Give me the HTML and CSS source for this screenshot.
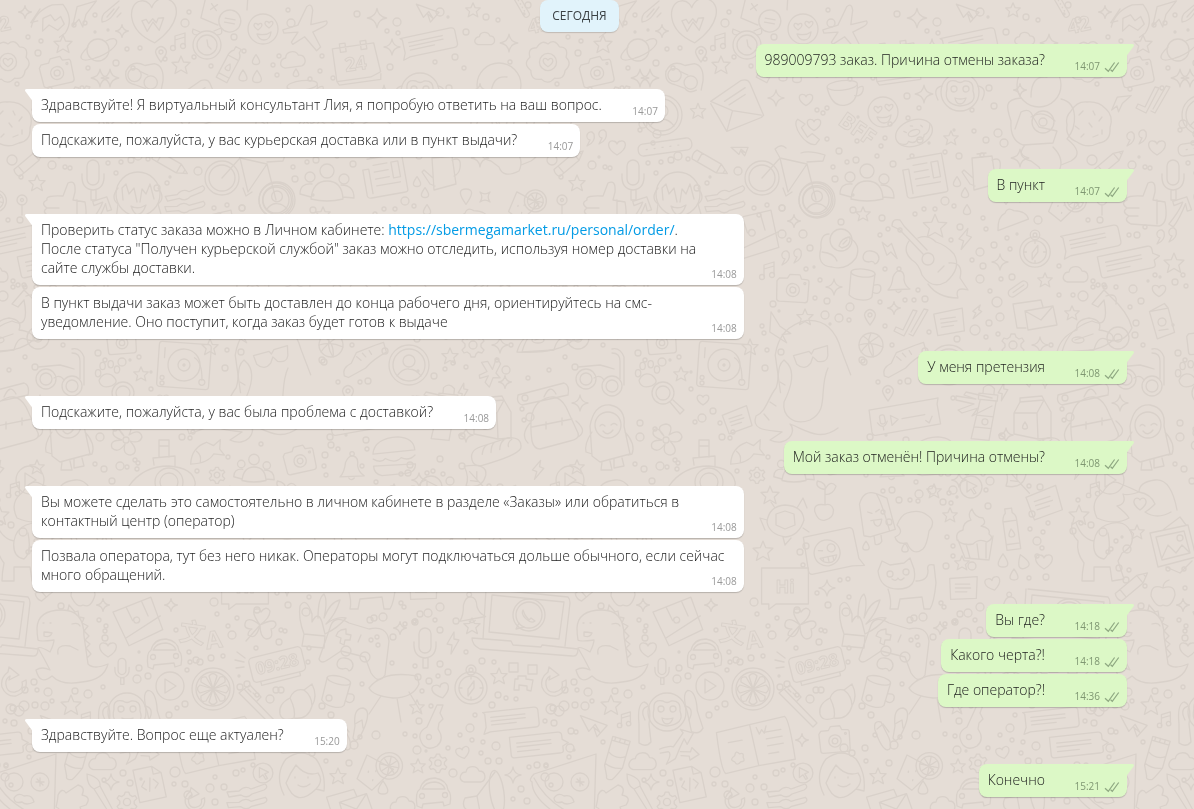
FILE: index.html
```html
<!DOCTYPE html>
<html lang="ru">
<head>
<meta charset="utf-8">
<title>Чат</title>
<link rel="stylesheet" href="styles.css">
</head>
<body>
<svg class="wallpaper" aria-hidden="true"></svg>
<svg class="defs" aria-hidden="true">
  <symbol id="tail" viewBox="0 0 8 12"><path d="M1.5 2.5 8 11.2V0H2.8C1 0 .5 1.100 1.500 2.500z"/></symbol>
  <symbol id="checks" viewBox="0 0 16 12"><path d="M1 7.200 4.300 10.300 10.600 1.500M6.600 8.800 8.300 10.300 14.700 1.500"/></symbol>
</svg>
<main class="chat">
  <div class="day"><span class="day-label">СЕГОДНЯ</span></div>

  <section class="group out">
    <article class="bubble"><svg class="tail"><use href="#tail"/></svg><p class="text">989009793 заказ. Причина отмены заказа?<span class="spacer"></span></p><div class="meta"><time>14:07</time><svg class="checks"><use href="#checks"/></svg></div></article>
  </section>

  <section class="group in">
    <article class="bubble"><svg class="tail"><use href="#tail"/></svg><p class="text">Здравствуйте! Я виртуальный консультант Лия, я попробую ответить на ваш вопрос.<span class="spacer"></span></p><div class="meta"><time>14:07</time></div></article>
    <article class="bubble"><p class="text">Подскажите, пожалуйста, у вас курьерская доставка или в пункт выдачи?<span class="spacer"></span></p><div class="meta"><time>14:07</time></div></article>
  </section>

  <section class="group out">
    <article class="bubble"><svg class="tail"><use href="#tail"/></svg><p class="text">В пункт<span class="spacer"></span></p><div class="meta"><time>14:07</time><svg class="checks"><use href="#checks"/></svg></div></article>
  </section>

  <section class="group in">
    <article class="bubble wide"><svg class="tail"><use href="#tail"/></svg><p class="text">Проверить статус заказа можно в Личном кабинете: <a href="https://sbermegamarket.ru/personal/order/">https://sbermegamarket.ru/personal/order/</a>.<br>После статуса "Получен курьерской службой" заказ можно отследить, используя номер доставки на<br>сайте службы доставки.<span class="spacer"></span></p><div class="meta"><time>14:08</time></div></article>
    <article class="bubble wide"><p class="text">В пункт выдачи заказ может быть доставлен до конца рабочего дня, ориентируйтесь на смс-<br>уведомление. Оно поступит, когда заказ будет готов к выдаче<span class="spacer"></span></p><div class="meta"><time>14:08</time></div></article>
  </section>

  <section class="group out">
    <article class="bubble"><svg class="tail"><use href="#tail"/></svg><p class="text">У меня претензия<span class="spacer"></span></p><div class="meta"><time>14:08</time><svg class="checks"><use href="#checks"/></svg></div></article>
  </section>

  <section class="group in">
    <article class="bubble"><svg class="tail"><use href="#tail"/></svg><p class="text">Подскажите, пожалуйста, у вас была проблема с доставкой?<span class="spacer"></span></p><div class="meta"><time>14:08</time></div></article>
  </section>

  <section class="group out">
    <article class="bubble"><svg class="tail"><use href="#tail"/></svg><p class="text">Мой заказ отменён! Причина отмены?<span class="spacer"></span></p><div class="meta"><time>14:08</time><svg class="checks"><use href="#checks"/></svg></div></article>
  </section>

  <section class="group in">
    <article class="bubble wide"><svg class="tail"><use href="#tail"/></svg><p class="text">Вы можете сделать это самостоятельно в личном кабинете в разделе «Заказы» или обратиться в<br>контактный центр (оператор)<span class="spacer"></span></p><div class="meta"><time>14:08</time></div></article>
    <article class="bubble wide"><p class="text">Позвала оператора, тут без него никак. Операторы могут подключаться дольше обычного, если сейчас<br>много обращений.<span class="spacer"></span></p><div class="meta"><time>14:08</time></div></article>
  </section>

  <section class="group out">
    <article class="bubble"><svg class="tail"><use href="#tail"/></svg><p class="text">Вы где?<span class="spacer"></span></p><div class="meta"><time>14:18</time><svg class="checks"><use href="#checks"/></svg></div></article>
    <article class="bubble"><p class="text">Какого черта?!<span class="spacer"></span></p><div class="meta"><time>14:18</time><svg class="checks"><use href="#checks"/></svg></div></article>
    <article class="bubble"><p class="text">Где оператор?!<span class="spacer"></span></p><div class="meta"><time>14:36</time><svg class="checks"><use href="#checks"/></svg></div></article>
  </section>

  <section class="group in">
    <article class="bubble"><svg class="tail"><use href="#tail"/></svg><p class="text">Здравствуйте. Вопрос еще актуален?<span class="spacer"></span></p><div class="meta"><time>15:20</time></div></article>
  </section>

  <section class="group out">
    <article class="bubble"><svg class="tail"><use href="#tail"/></svg><p class="text">Конечно<span class="spacer"></span></p><div class="meta"><time>15:21</time><svg class="checks"><use href="#checks"/></svg></div></article>
  </section>
</main>
<script src="wallpaper.js"></script>
</body>
</html>
```
FILE: styles.css
```css
* { box-sizing: border-box; }

body {
  margin: 0;
  background: #e5ddd6;
  color: #1c1c1c;
  font-family: "Open Sans", "Noto Sans", sans-serif;
  font-size: 14px;
  font-weight: 300;
  line-height: 19px;
}

.defs { display: none; }

.wallpaper {
  position: fixed;
  inset: 0;
  z-index: -1;
  width: 100%;
  height: 100%;
  fill: none;
  stroke: #d9d1ca;
  stroke-width: 1.3;
  stroke-linecap: round;
  stroke-linejoin: round;
}

.wallpaper * { vector-effect: non-scaling-stroke; }

.wallpaper text {
  font-family: "Open Sans", "Noto Sans CJK SC", sans-serif;
  font-weight: 700;
  font-size: 20px;
  text-anchor: middle;
  stroke-width: 1;
}

.wallpaper .digits { font-size: 17px; }

.chat {
  display: flex;
  flex-direction: column;
  gap: 12px;
  padding: 0 67px 12px 32px;
}

.day { display: flex; justify-content: center; }

.day-label {
  padding: 6px 12px 7px;
  border-radius: 8px;
  background: #e1f3fb;
  box-shadow: 0 1px 1px rgba(0, 0, 0, .16);
  color: #3b4144;
  font-size: 12px;
  font-weight: 400;
}

.group { display: flex; flex-direction: column; gap: 2px; }
.group.in { align-items: flex-start; }
.group.out { align-items: flex-end; }

.bubble {
  position: relative;
  max-width: 65%;
  padding: 6px 7px 8px 9px;
  border-radius: 8px;
  box-shadow: 0 1px 1px rgba(0, 0, 0, .2);
}

.bubble.wide { width: 65%; }
.in .bubble { background: #fff; }
.out .bubble { background: #dcf8c6; }
.in .bubble:first-child { border-top-left-radius: 0; }
.out .bubble:first-child { border-top-right-radius: 0; }

.text { margin: 0; overflow-wrap: break-word; }
.text a { color: #039be5; font-weight: 400; text-decoration: none; }

.spacer { display: inline-block; width: 56px; height: 1px; }
.out .spacer { width: 75px; }

.meta {
  display: flex;
  justify-content: flex-end;
  align-items: center;
  gap: 4px;
  height: 15px;
  margin: -10px 0 -5px;
  color: #999;
  font-size: 10px;
  font-weight: 400;
  line-height: 15px;
}

.out .meta { color: #7f9772; }

.tail {
  position: absolute;
  top: 0;
  left: -8px;
  width: 8px;
  height: 12px;
  fill: #fff;
}

.out .tail {
  left: auto;
  right: -8px;
  fill: #dcf8c6;
  transform: scaleX(-1);
}

.checks {
  width: 16px;
  height: 12px;
  fill: none;
  stroke: #8fa882;
  stroke-width: 1.2;
}
```
FILE: wallpaper.js
```js
// Doodle shapes, each drawn around its own centre.
const shapes = {
  star: '<path d="M0-9 2.500-3 9-2.500 4.300 2 6 8.500 0 5-6 8.500-4.300 2-9-2.500-2.500-3z"/>',
  spark: '<path d="M0-8Q1-1 8 0 1 1 0 8-1 1-8 0-1-1 0-8z"/>',
  heart: '<path d="M0 7C-12 0-9-8-4-7-1-7 0-4 0-4S1-7 4-7C9-8 12 0 0 7z"/>',
  drop: '<path d="M0-6Q8 5 0 5-8 5 0-6z"/>',
  cloud: '<path d="M-9 7C-16 4-12-3-7-3-6-10 4-10 6-4 13-4 14 5 8 7z"/>',
  bolt: '<path d="M1-11-6 1-1 2-2 11 6-3 1-4z"/>',
  note: '<path d="M-4 6V-6L6-9V3M-4-2 6-5"/><circle cx="-6" cy="6" r="2.500"/><circle cx="4" cy="4" r="2.500"/>',
  pin: '<path d="M0 8Q-7-1-5-4 0-11 5-4 7-1 0 8z"/><circle cy="-2" r="2"/>',
  plane: '<path d="M-14-7 14-2 6 11 1 2 8 6 2-1-3 7z"/>',
  jet: '<path d="M-4-22Q0-28 3-20L5-5 20-13Q23-11 18-6L9 2 21 15 18 20 2 9-8 20-10 18-6 6-20 11-22 8-8-1z"/>',
  planet: '<circle r="11"/><path d="M-10-3C-22 8-18 13-3 8 8 5 22-5 18-10 16-13 8-9 8-9"/>',
  bigheart: '<path d="M0 19C-26 5-21-19-10-20-2-21 0-13 0-13S4-23 14-20C28-15 24 5 0 19z"/><path d="M-10-2-6 8 0 0 5 8 10-3 5-3 3 1 0-3-4 1-6-3z"/>',
  phone24: '<path d="M-6-9C-12-5 0 14 9 12L12 8 6 3 2 6-3-2 0-5z"/>',
  flower: '<path d="M0-19Q7-25 12-16 22-16 19-5 26 2 18 9 17 19 7 17 0 25-7 18-18 20-18 9-27 2-19-5-22-15-12-15-7-24 0-19z"/><circle r="9"/><path d="M0 5C-9-1-4-7 0-2 4-7 9-1 0 5z"/>',
  camera: '<path d="M-15-9-7-10-5-14 5-15 7-11 13-11Q15-11 15-8L16 9Q16 12 13 12L-12 14Q-15 14-15 11L-17-6z"/><circle cy="1" r="6.500"/><circle cy="1" r="3"/><circle cx="11" cy="-7" r="1"/>',
  mask: '<path d="M-20-4C-14-16-4-12 0-10L10-12Q20-10 19 6L17 16"/><circle cx="-11" r="7"/><circle cx="6" cy="8" r="7"/><path d="M-20-4Q-22 8-11 10L0 14Q4 20 12 16M-6-4 3 0"/>',
  clock: '<circle r="14"/><circle r="10"/><path d="M0-5 1 1 4 4M-10-10Q-16-10-14-16L-7-13M10-10Q17-10 14-17L7-14"/>',
  bottle: '<path d="M-6 18V-8Q-5-13-3-14V-18H3V-14Q6-12 6-8V18zM-6-7H6M-6 13H6M0 0Q5 7 0 7-5 7 0 0z"/>',
  calendar: '<path d="M-22-15 22-15 25 16 14 20H-22zM-22 20-20 24 24 24 25 18M-14-19H-8V-10H-14zM8-19H14V-10H8z"/><text y="11" font-size="20">24</text>',
  n42: '<text y="7">42</text>',
  letter: '<path d="M-22-4 4-22Q10-24 12-20L24 8 22 10-8 22-22-2M-22-4-3 4 22 8M-3 4-8 22M-10-4 8-16M-6-1 8-10"/>',
  cup: '<ellipse cy="-8" rx="16" ry="5"/><path d="M-16-7C-14 8-8 13 0 13 10 13 15 6 16-7M15-3Q24-8 21 0 18 6 12 4"/>',
  love: '<circle r="15"/><path d="M-5 1C-13-4-7-8-5-4-2-8 2-4-5 1zM6-1C-2-6 4-10 6-6 9-10 13-6 6-1zM-6 5Q3 7 8 3 7 11 1 11-4 11-6 5z"/>',
  bff: '<text>BFF</text>',
  donut: '<ellipse rx="19" ry="13"/><ellipse rx="6" ry="3"/><path d="M-17 5Q-11 10-8 6-3 11 1 7 7 10 9 5 15 5 18-3M-9-5-7-3M-1-8 1-7M9-5 10-3"/>',
  paper: '<path d="M-17-19H18V18Q18 20 14 20H-19Q-24 20-23 15V-9H-17V16M-12-12H2M-12-5H2M-12 2H2M-12 9H12M6-12H13V4H6z"/>',
  ape: '<circle r="19"/><path d="M-18-6Q-28-4-22 8M18-6Q28-4 22 8M-13-3Q-14-13-4-11 0-8 4-11 14-12 13-1 18 12 0 14-17 12-13-3z"/><circle cx="-6" cy="-3" r="3"/><circle cx="6" cy="-3" r="3"/><path d="M-5 6Q0 8 6 6 4 12 0 12-4 12-5 6z"/>',
  arm: '<path d="M-5 2Q-7-18 0-20 8-18 5 2L7 20Q2 26-5 21z"/>',
  astro: '<circle cy="-22" r="22"/><path d="M-8-10Q-8-32 8-30M-18-9C-36-8-32 2-28 14-29 30-22 36-16 38L14 36 18 24 0 20-6 10Q-9 0-18 5L-24 22M-8 10Q4 2 16 14M-14 38Q-24 50-8 54L0 60Q4 72 20 64 26 52 14 40M22-8C40-4 38 20 28 32Q46 46 32 54L22 58"/><circle cx="4" cy="15" r="11"/><circle cx="4" cy="15" r="4"/>',
  cookie: '<path d="M-18-12Q-12-22-2-21 10-22 17-14 25-7 21 5 22 18 10 20-2 26-12 19-24 14-22 2-24-6-18-12z"/><path d="M-10-8-6-12M4-12 6-8M-14 3-10 6M0 0 3 4M10-2 13-6M4 14 9 12M-8 14-5 11M13 7V11"/>',
  ticks: '<path d="M-17 7-7 12 6-13 2-14-8 6-15 3zM-2 10 2 12 17-14 13-15 0 8"/>',
  face: '<circle r="20"/><circle r="16"/><circle cy="-4" r="6"/><path d="M-12 11Q-6 3 0 4 7 4 12 11"/>',
  quote: '<path d="M-4-6A4 4 0 1 0-6 2L-9 8Q0 4-2-4zM8-8A4 4 0 1 0 6 0L3 6Q12 2 10-6z"/>',
  pill: '<rect x="-27" y="-6" width="54" height="12" rx="5"/><path d="M-19 0h1M-11 0h1M-3 0h1M5 0h1M13 0h1"/>',
  pencil: '<path d="M-19-5H9L19 0 9 5H-19Q-22 0-19-5zM-13-5V5M9-5V5M15-2V2"/>',
  bike: '<circle cx="-27" cy="3" r="17"/><circle cx="-27" cy="3" r="13"/><circle cx="27" cy="25" r="17"/><circle cx="27" cy="25" r="13"/><path d="M-27 3-9-17-1 17 18-11-9-17M18-11 27 25M12-22Q20-25 36-20L34-14 18-13M-9-17-14-26Q-8-32-3-27M-6 13-3 21 3 17"/>',
  people: '<circle cy="-14" r="7"/><circle cx="-17" cy="-8" r="5"/><circle cx="17" cy="-6" r="5"/><path d="M-16 14Q-14-4 0-4 15-4 16 14 0 18-16 14zM-16 12-27 9Q-27-2-15-1M16 12 27 13Q27 0 14 0"/>',
  mic: '<rect x="-6" y="-18" width="12" height="25" rx="6"/><path d="M-11-4Q-12 11 0 12 12 11 11-4M-2 12V22H3V12"/>',
  thumb: '<path d="M0-8 5-21Q13-25 12-12L10-4 22-2Q26 20 16 22L-12 20Q-20 16-14 12-22 8-16 4-23-1-16-4-18-9 0-8M-14 12-5 12M-16 4-4 4M14-4V20"/>',
  shy: '<circle r="22"/><path d="M-20-6Q-28 4-20 10L-22 26M20-6Q28 4 20 10L24 24M-15 6-16-6-12-10-9 0-4-6-1 8M16 5 12-10 8 0 4-5 2 8M-7 12Q0 16 8 11 4 22-2 20-5 18-7 12z"/>',
  arrows: '<path d="M-10 14Q-2 0 0-10L-8-5-10-9 3-16 10-4 6-2 3-9Q0 6-5 16z"/>',
  brush: '<path d="M-20 3-8 2Q-2-4 4 0L18-5Q22-2 17 1L5 5Q0 10-6 6L-18 8z"/>',
  loli: '<circle cy="-4" r="5"/><circle cy="-4" r="1.500"/><path d="M0 1V11"/>',
  can: '<path d="M-10-14 10-16 14 12-8 18zM10-12Q20-16 18-4 17 2 12 4M-9 6-18-2-20 0-12 12-7 14M-5-18 4-19"/>',
  dish: '<path d="M-16 10Q-14-4-6-6-3-12 3-7 16-4 16 4z"/>',
  glass: '<path d="M-7-13 17-6 3 15-11 8zM-3 0v1M3-2v1M2 6v1"/><circle cx="13" cy="-8" r="11"/><circle cx="13" cy="-8" r="8"/><path d="M5-8H21M13-16V0M8-13 18-3M8-3 18-13"/>',
  bubbleL: '<path d="M-30-10H24Q28-10 28-6V7Q28 11 24 11H-24L-31 13-28 6V-8zM-22-4H14M-22 0H14M-22 4H4"/>',
  bubbleR: '<path d="M-27-11H24Q28-11 28-7V-3L34 1 28 4V9Q28 11 24 11H-24Q-27 11-27 8zM-20-4H16M-20 0H16M-20 5H3"/>',
  compass: '<circle r="16"/><circle r="12"/><circle cy="-18" r="5"/><circle cy="-18" r="2"/><path d="M3-7-3 1-3 8 3 0zM0-12V-9M0 12V9M-12 0H-9M12 0H9"/>',
  guitar: '<path d="M-26-26-3-2M-22-30 1-6M-26-26-34-30Q-34-38-26-36L-22-30M-17-15Q-24-5-14 4-7 8-4 19 6 34 20 26 36 12 28-2 20-11 10-14 2-22-8-18M23 7Q38 6 34 22L42 34Q28 30 32 42 12 42 2 28M12 16 18 10"/><circle cx="2" cy="3" r="6"/>',
  bird: '<path d="M-9-14Q-18-14-17 0-22 18-6 19 8 23 18 10 24-4 10-11"/><circle cx="3" cy="-8" r="11"/><path d="M1-2Q3-10 12-11 13-2 4 0zM-16 4Q-4 5-1 13M5-4 9-8"/>',
  mug: '<ellipse cy="-12" rx="12" ry="4"/><path d="M-12-12V11Q-8 15 0 15 9 15 11 11L12-12M12-1Q20-4 19 4 17 9 11 6"/>',
  bell: '<path d="M-10 9Q-6 5-5-4-2-11 2-10 7-9 6-1 7 5 12 8zM-2 10Q0 13 3 10"/><circle cx="1" cy="-12" r="2"/>',
  map: '<path d="M-22-14 18-22 24 12-12 22zM-8-16-4-2M8-20 12-4M-14 14 24-2"/><circle cx="0" cy="-2" r="3"/>',
  moon: '<path d="M-8-3Q-7-10 0-9 8-8 8-1 7 3 4 4 2 0-2 2-8 2-8-3z"/>',
  memo: '<path d="M-14-10 15-12 14 11-13 12zM-8-4H7M-8 0H8M-8 4H4"/>',
  mail: '<path d="M-22-12 6-16 8-9M-22-12-18 12-9 12M-10-5 18-10 22 9-7 14zM-10-5 6 4 18-10"/>',
  clip: '<rect x="-11" y="-4" width="22" height="8" rx="4"/><path d="M-6 0H7"/>',
  passport: '<path d="M-11-12 5-18 8-13 11 12-7 16zM-11-12 8-13M-4 8H5"/><circle r="4"/>',
  scooter: '<path d="M-34 30Q-28 6-4-1 14 8 8-22L2-15-4-18 8-32 14-26Q32-10 36 6 28 22 12 18 2 12-2 28zM10-26Q22-30 20-18"/><ellipse cx="-18" cy="18" rx="6" ry="3"/><circle cx="22" cy="16" r="11"/><circle cx="22" cy="16" r="4"/>',
  snorkel: '<circle cx="-14" cy="8" r="10"/><circle cx="-14" cy="8" r="6"/><circle cx="12" cy="15" r="10"/><circle cx="12" cy="15" r="6"/><path d="M-22-4 0-6Q8-4 14-2M-6 7Q0 3 4 9M12-22Q20-24 24-14V14M12-18Q20-18 20-10V8"/>',
  paw: '<path d="M-10 6Q-6-4 4 0 14 8 4 12-8 16-10 6z"/><ellipse cx="-11" cy="-2" rx="3" ry="4"/><ellipse cx="-6" cy="-10" rx="3" ry="4"/><ellipse cx="3" cy="-12" rx="3" ry="4"/><ellipse cx="10" cy="-6" rx="3" ry="4"/>',
  lens: '<circle r="11"/><circle r="7"/><path d="M7 9 17 21 21 17 10 7"/>',
  deck: '<rect x="-26" y="-22" width="52" height="45" rx="3"/><circle r="16"/><circle r="6"/><circle r="1"/><path d="M10-8Q18-4 19 14M-20-16V-6"/><circle cx="19" cy="16" r="3"/><circle cx="-21" cy="14" r="2"/>',
  snake: '<path d="M-34 26C-24 22-22 8-14-2-10-12-14-24-6-30L-2-26C4-18 2-4-6 12-8 26 4 36 20 30 40 20 28 0 38-22M-34 26C-40 42-18 40-8 42L-20 50C-4 58 8 42 0 34 16 40 30 52 48 38M-20 12-14 16M-10-8-5-5M-26 24-21 30"/>',
  shades: '<path d="M-18-5-2-7 0-4 3-8 17-10 16 0Q14 7 5 4L1-1-2 5Q-9 12-16 4z"/><path d="M-36 30V-8Q-28-36 0-38 26-36 30-4L36 22"/>',
  ball: '<circle r="12"/><path d="M-12 0Q0-4 12 2M0-12Q-6 0 2 12M-8-9Q4-2 2 12M8-9Q-6 0-10 7"/>',
  shoe: '<path d="M-22 14Q-24 6-14 2L-8-8 12-14 20-16 22-6Q8 0 0 8L-18 16zM-8-4-4 0M-2-7 1-3M5-9 7-5"/>',
  voice: '<path d="M-34-14 34-14 36-14 34-8V12H-32Q-35 12-35 8zM-14-5V5L-7 0zM-3 0H20M20 6 23 9 27 3"/><rect x="-25" y="-7" width="5" height="9" rx="2"/><path d="M-28 0Q-23 9-18 0M-23 5V8"/>',
  gear: '<path d="M-2-11H2L3-8 6-6 9-7 11-4 8-1V2L11 5 9 8 5 7 3 9 2 12H-2L-3 9-6 7-9 8-11 5-8 2V-1L-11-4-9-7-6-6-3-8z"/><circle r="4"/>',
  blue: '<path d="M-10-8-4-10 2-3 4-15 9-10 6 0 11 4 4 5 2 15-3 11-1 4-9 8-10 5-3 0z"/>',
  ufo: '<path d="M-28 12Q-24-4-8-10-10-20 4-22 18-20 14-10 30-8 28 0 14 14-28 12zM-10 0 8-6"/>',
  tower: '<path d="M-7-12H9L6 28H-12zM-9-18H10V-12H-9zM-5-18V-24Q0-30 6-24V-18M-9 4H8M-10 16H7"/><circle cx="0" cy="10" r="3"/>',
  burst: '<path d="M22-6-4-12-6-9 6-5-14-8-14-4 4 0-12 6-8 9 8 4 2 12 22 2"/>',
  milk: '<path d="M-18-5-12-16 12-18 19-6V20L6 21-18 16zM-18-5 5-5 12-18M5-5 6 21M-12-16V-20L10-22 12-18M-7 4Q-2 11-7 11-12 11-7 4z"/>',
  bread: '<path d="M-24 8Q-28-4-14-7L14-13Q28-12 25-1 20 6-16 12-22 12-24 8zM-14 1Q-12-7-8-8M-5 0Q-4-8 0-10M4-2Q5-9 9-11M13-4Q12-8 17-11"/>',
  pack: '<path d="M-18 20Q-22-8-12-18 6-32 16-14L28 12Q30 18 20 20L-10 28Q-16 28-18 20zM-18 6 22-2M-4 1v7M12-3v7M-20 2Q-30 14-22 22M26 0Q38 10 28 16M-32-26 14-38Q20-36 18-26L-28-16Q-34-18-32-26zM-6-24Q0-38 6-27"/>',
  penguin: '<path d="M-16-8Q-12-30 4-29 20-26 18-8L24 20-6 28-14 22zM-14-2Q-22 10-20 18L-14 20M19-2Q30 10 26 20L22 21M-4 28-5 36 6 36 4 27M8 25 8 34 18 32 16 24M-6-8Q-4-11-1-8M5-9Q8-12 11-9M-3-3Q2 3 7-4"/><circle cx="2" cy="-9" r="13"/>',
  blossom: '<path d="M-2-4Q-12-14 0-16 8-15 3-5 14-12 16-3 14 4 4 1 14 12 5 15-4 15-1 4-8 14-14 8-17 0-4 0-16-4-12-10-8-14-2-4z"/><circle r="3"/>',
  sub: '<path d="M-34 12Q-20-8 6-8 30-6 32 8 34 14 20 22M-9-9-10-16 12-18 12-8M-4-17V-34H6V-17M-4-28H6"/><circle cx="6" cy="8" r="14"/><circle cx="6" cy="8" r="9"/>',
  fish: '<path d="M-17 8Q-12-8 4-9L10-4 18-8 15 1 18 8 8 4Q0 12-17 8zM-8-3Q-4 2-7 8"/>',
  burger: '<path d="M-22-2Q-20-18 4-18 20-16 20-4zM-22 3Q-14 8-10 3 0 9 6 3 14 7 20 1M-22 10H20Q20 18 10 19L-14 20Q-22 18-22 10z"/>',
  leaf: '<path d="M-12-12Q14-16 12-2 8 14-10 10-6 0-12-12zM-6-6 16 18M2 2V-6M4 5-5 4"/>',
  cursor: '<circle r="11"/><path d="M-4-6 6-1 2 1 5 6 3 7 0 2-4 5z"/>',
  hands: '<path d="M-28 18Q-36 2-22-8-14-22-4-16 6-12 14-8 2-4-2-6 2 4-8 6 2 14 4 18-10 26-28 18M52 10Q46-22 30-20 14-18 14-8 26-6 30 4 24 10 20 12 32 20 46 12"/><path d="M15 10C3 1 12-5 15 0 18-5 27 1 15 10z"/>',
  sprout: '<path d="M0 8Q-14 6-12 16-8 28 0 26 10 24 10 14 8 6 0 8V-10Q-12-12-9-20 2-18 0-10 6-22 13-14 10-4 0-4"/>',
  ice: '<path d="M-14 20-14-12Q-8-26 4-20L14-14 18 18-8 22zM4-20Q8-12 12 18M-4 22V30Q0 32 3 28V22M-7-3-3-1M5-4 1-2M-5 6H6Q4 14 0 12-3 10-2 6"/>',
  blob: '<path d="M-18-2Q-14-12-8-14 4-18 12-12 22-6 14 4 12 18 8 22-2 30-8 16-18 18-20 10-10 6-18-2z"/>',
  cake: '<path d="M-17 8-10 26 14 28 18 4M-18 8Q-20 0-12-2-12-10-4-12-8-18-3-23 0-14 8-14 12-8 6-6 16-4 14 2 20 6 12 10 4 6-2 12-12 14-18 8zM-9 12-5 26M2 12 4 27M11 11 11 26"/>',
  turtle: '<path d="M-18 2Q-16-14 0-15 18-14 19 0 14 16 0 17-16 14-18 2zM-9-6 0-9 9-6 10 5 0 9-9 5zM-18 0-25-2-20 10M12-12 18-22 22-12M-2 17 0 25 6 18M-10-12-14-18M18 8 24 12"/>',
  hi: '<path d="M-26-20H26V20H-10L-18 26V20H-26z"/><text y="8">Hi</text>',
  wink: '<path d="M-24-20H22Q26-20 26-16V12L30 20 18 18H-22Q-26 18-26 14z"/><circle cx="-4" r="13"/><path d="M-12-4-8-3M-12 4H5Q2 11-4 10-10 9-12 4M-9 4V8M-4 4V9M1 4V8"/><circle cx="1" cy="-4" r="4"/>',
  dog: '<path d="M-24-12Q-32-20-30-30M-26-30Q-20-14-8-12-6-24 4-28 24-36 30-18 32-6 20 0L16 8 22 26 10 28 8 14-8 14-8 28-20 28Q-20 20-18 10-26 0-24-12M-8-12Q-10 4 2 6 10 0 6-20"/><circle cx="20" cy="-16" r="1"/>',
  pics: '<path d="M-22-12 16-20 24 12-14 22zM-16-8 12-14 18 8-10 15zM-10 13-4 0 4 8 10 0 18 8M-8-16 8-28 14-20M20 16 8 28-6 22"/><circle cx="8" cy="-7" r="3"/>',
  cat: '<path d="M-24-14-20-24-12-20 2-22 8-27 12-16Q16 4-4 4-22 4-24-14zM14-4Q26-4 26-14 24-22 32-20L34-2Q32 18 28 24H22L20 12-2 14-4 24H-12Q-10 16-14 4"/><path d="M-10-6Q-6-3-4-7-2-3 2-7"/><circle cx="-12" cy="-11" r="3"/><circle cx="4" cy="-13" r="3"/>',
  laptop: '<path d="M-38-30 42-22Q44-20 44-16L39 27M-40-30-43 20M-34-24 38-17 33 20-37 13zM-54 19-15 22-13 26 15 28 16 26 52 30Q52 38 46 37L-46 30Q-54 26-54 19z"/><circle cx="3" cy="-4" r="13"/><path d="M-7 4-10 10-2 8M-3-9C-6-4 4 6 9 2L5-1 3 1-1-4z"/><circle cx="3" cy="-4" r="16"/>',
  apple: '<path d="M0-5Q-12-10-12 3-6 16 0 12 8 16 12 2 12-9 0-5M0-5Q0-11 6-13"/>',
  plant: '<path d="M-12 22-14 34 8 36 9 24zM-12 22Q-18 6-16-6-10-16-4 2L-4 10Q2-2 6 10L9 22M2 6Q2-14 8-18 12-12 8 6 14-10 24-12 20 2 10 12 20 4 30 6 22 16 9 22"/>',
  dino: '<path d="M-33-18Q-32-36-8-36 14-36 14-10 16 4 18 18 24 24 38 18 34 34 12 36-8 40-18 30-30 40-34 24-28 20-20 24-26 12-32 2-30 0-20 6-16-2-16-6-30-4-32-6-33-12-33-18zM-26-14Q-22-14-18-13-20-8-26-10zM-12 8Q-14-2 0 0L8 4M2-22Q8-24 10-20M-2-36-1-41 5-34 8-35 9-29 14-28 12-23 18-20 14-15 19-10 15-6 20-2 16 2 21 8 17 12"/><path d="M-27-23h1M-20-23h1"/>',
  car: '<path d="M-16 12Q-18-2-13-5-10-16 2-16 14-14 15-4 19 0 17 10L11 12 10 8-10 10-11 14zM-11-5Q-8-12 2-12 10-11 12-5z"/><circle cx="-11" cy="2" r="2.500"/><circle cx="12" cy="1" r="2.500"/>',
  wen: '<text>文</text>',
  la: '<text font-size="26">A</text>',
  clover: '<path d="M0 0Q-10-14-4-16 0-17 1-13 6-20 10-14 10-7 0 0 16-8 16 0 14 4 11 4 14 14 6 14 0 12 0 0-4 16-12 10-12 6-8 4-18 4-14-4-10-8 0 0L-14 16"/>',
  pad: '<path d="M-34 14-22-20Q-18-30-4-22L16-16Q34-20 36-4L32 30Q26 40 18 28L12 12-12 6-24 14Q-32 20-34 14zM-12-15-7-16-7-11-2-10-3-5-8-5-9 0-13-2-12-7-17-9-15-13zM5-3 8-10"/><circle cx="-7" cy="6" r="5"/><circle cx="12" cy="12" r="5"/><circle cx="18" cy="-5" r="2"/><circle cx="25" cy="0" r="2"/><circle cx="24" cy="-8" r="2"/>',
  play: '<circle r="14"/><path d="M-5-7V7L6 0z"/>',
  orange: '<circle r="21"/><circle r="17"/><path d="M0 0-4-13Q0-18 4-13zM0 0 7-12Q13-14 12-7zM0 0 13-4Q18 0 13 4zM0 0 12 7Q13 13 7 12zM0 0 4 13Q0 18-4 13zM0 0-7 12Q-13 14-12 7zM0 0-13 4Q-18 0-13-4zM0 0-12-7Q-13-13-7-12z"/>',
  digital: '<rect x="-27" y="-12" width="54" height="25" rx="4"/><path d="M-20 13V17H20V13"/><text class="digits" y="6">09:28</text>',
  rays: '<path d="M-3-8 5-2M-5 0 4 2M-4 8 4 7"/>',
  croissant: '<path d="M-18 12Q-20 2-8-4-4-14 6-12L14-18Q20-6 14 4 10 18-4 16-16 20-18 12zM-8-4Q-2 8-4 16M6-12Q14-6 14 4"/>',
  grill: '<path d="M-24-4Q-10-22 24-16L26-8Q20 6 0 6-20 4-24-4zM-12 4-24 22M4 6 8 30M16 0 28 20"/>',
  refresh: '<path d="M-6-12Q-14-6-12 3-8 13 2 12 14 8 12-4L8-2Q10 6 1 8-7 9-8 1-9-5-4-8M-6-12-5-17 5-9-5-4-4-8"/>',
  toothbrush: '<path d="M-14-14-9-18 24 16 20 20zM-14-14-4-4M-9-18-3-22 8-10 4-6M-5-18l3 3M0-14l3 3"/>',
  flops: '<path d="M-14 0Q-16-10-8-8L0 8Q4 20-2 20-8 18-14 0zM-12-1-6-6 0 2M6-4Q4-22 14-22 22-20 16-4 8 16 4 8zM6-6 13-10 14-2"/>',
  key: '<path d="M-10 18Q-18 6-6 0L4-22 10-22 7-14 10-8 6-4 5 2Q12 12 4 19-4 24-10 18z"/><circle cx="-4" cy="10" r="2.500"/>',
  tube: '<path d="M-9-20 9-20 9 8Q4 20 2 22-4 24-4 20L-9 10zM-9-16 9-16M-6-20v4M-1-20v4M4-20v4M-9-4Q0 2 9-4M-9 8Q0 12 9 8"/>',
  book: '<path d="M-36-18-2-20 34-22Q38-18 37 22L0 22-34 24Q-38 20-36-18zM-2-20 0 22M-26-6H-12M12-10H28M12-3H28M12 4H28M12 12H22"/><path d="M4-16 6-9 9-13 11-9 14-16M-22 8Q-20 2-17 7-12 6-14 11-12 16-17 15-22 19-23 14-29 11-22 8z"/>',
  shuffle: '<path d="M-18-4Q-8-6-4-4L2-10 8-16 6-20 18-14 10-4 8-10Q2-2-4 8L-14 12Q-6 2-10 0H-18M2 2 12 4 14 0 20 8 10 12 10 8 2 6"/>',
  code: '<path d="M-14-16H5L13-8V17H-14zM5-16V-8H13M-5-3-9 2-5 6M4-3 8 2 4 6M1-5-2 8"/>',
  pizza: '<path d="M-34-6Q-38-8-32-14L30-34 28 34M-32-10Q-16 22 28 34M-34-6Q-34 16 16 40M-12 10Q-8 4-2 8 6 6 8 14 0 18-4 14-12 16-12 10z"/><circle cx="-12" cy="-6" r="9"/><circle cx="14" cy="-6" r="9"/><path d="M10-6H18M14-10V-2M11-9 17-3"/>',
  horn: '<path d="M-20 4Q-24 12-18 16L-6 18 14 22M-20 4-8 2 10-22"/><ellipse cx="12" rx="7" ry="22" transform="rotate(-8)"/><path d="M-8 2-5 18"/>',
  girl: '<path d="M-18 20Q-28 0-16-16 0-28 14-16 24-2 22 16L14 14Q-6 34-16 8-12-2-6-10 4 2 16-2 22 6 14 14M-4 10Q2 14 8 9M-7 2v1M6 2v1"/>',
  wand: '<path d="M-10-18Q4-14 3-6L18 22 14 24-3-3Q-10-6-10-18zM-3-3 3-6"/>',
  puzzle: '<path d="M-14-6Q-10-14-6-8L6-16Q14-14 10-6 20-4 14 4L8 6 12 18-12 16Q-10 8-16 6-14-2-14-6z"/>',
  creeper: '<path d="M-14-14h9v9h-9zM5-12h9v9H5zM-5-1H3L3 2 10 3 8 14 4 13 4 9-4 8-4 13-9 13-8 2-5 2z"/>',
  rocket: '<path d="M-18 14Q-20-2-6-14L4-18Q20-8 16 8L12 14M-14 6-20 10-16-6M-10 2-4-4 2 0 6-6 12 0 8 8-2 6-6 14z"/>',
  wing: '<path d="M-9 14-8-6 10-15 2 0 1 13-4 6z"/>',
  meteor: '<path d="M-9 9Q-10 2-4-2L8-12M-9 9Q-2 8 2 2L8-6M-4 4 3-4M6 4 10 0"/>',
  calc: '<path d="M-20-20-22 14-4 18M20-20 22-2M-14-2l6 6M-8-2-14 4"/><circle cx="7" cy="12" r="11"/><path d="M2 10H12M2 14H12"/>'
};

// shape, x, y, scale, rotation
const doodles = `n42 -1 25 1 -12;spark 25 12 .8 0;rocket 53 20 1 20;wing 84 14 1 10;meteor 111 13 1 0;bigheart 153 22 1.100 -5;
spark 122 31 .8 0;calc 225 8 1 10;love 263 29 1 0;jet 305 28 .95 15;spark 377 18 1.200 0;plane 427 12 .85 10;star 473 10 .8 0;pill 521 5 .5 60;
star 63 44 1 0;planet 98 50 1 0;flower 8 62 .95 0;camera 57 72 1 -8;note 179 42 1 0;pin 161 54 1 0;clock 207 45 1 0;bottle 230 64 1 28;
star 181 65 1 0;spark 100 78 1.100 0;mask 145 75 .95 0;cloud 293 60 1 -8;drop 256 60 .9 0;drop 243 76 1 0;drop 257 77 1.100 0;drop 296 73 .7 0;
calendar 355 60 .95 -8;spark 392 47 1 0;bubbleL 430 42 .95 -12;cloud 485 39 .8 0;spark 509 43 1.100 0;letter 196 106 1.150 0;cup 303 93 .95 -6;love 343 112 1 0;
spark 236 98 1 0;star 158 111 .85 0;bff 313 135 1.100 35;phone24 265 130 1.200 0;heart 274 125 .8 0;donut 374 133 1 -20;star 411 138 .8 0;spark 384 94 1.100 0;
heart 266 100 .8 0;paper 387 175 1 -10;ape 420 92 1 0;astro 499 107 1 0;spark 480 90 .8 0;cookie 9 123 1 0;wing 41 103 .7 20;ticks 73 101 1 0;spark 110 78 1.100 0;
face 122 115 1 0;quote 56 138 1 0;heart 77 148 1 0;pill 125 147 1 -8;pencil 171 164 1 30;plane 200 150 .6 -10;bike 249 175 1 0;people 327 185 1 0;
mic 93 178 1 0;thumb 63 204 1 0;shy 138 194 1 0;arrows 101 212 1 10;brush 185 192 1 -4;brush 185 205 1 4;loli 22 204 1 0;star 37 183 .9 0;pencil 30 162 .9 -40;
can 442 172 1 0;drop 417 182 .9 0;drop 425 193 .9 0;drop 427 210 .9 0;spark 480 158 1.100 0;drop 466 196 1.400 180;spark 485 197 .9 45;dish 472 218 1 -10;glass 521 206 1 12;
map 212 235 1.100 -2;spark 254 221 .8 0;face 277 200 .9 0;star 323 214 .8 0;bubbleL 12 240 1 -12;bubbleR 46 262 1 -12;quote 86 236 1 0;star 94 263 1.100 0;
compass 495 252 .95 0;bolt 425 239 1 10;guitar 386 256 1 0;star 395 226 1.300 0;bird 298 248 1 0;bolt 350 250 1 -50;moon 331 260 1 0;quote 251 257 1 0;note 228 271 1 0;
camera 253 289 1 8;spark 294 287 1 0;mug 322 285 1 5;bell 358 281 1 0;cloud -4 275 1 0;star 505 280 .8 0;spark 460 262 1 0;clip 478 289 1 -35;star 265 317 .9 0;wing 239 328 1 -60;
pin 330 317 1 0;spark 354 308 .8 0;ticks 371 324 1 0;memo 409 322 1 -8;bolt 437 312 .7 20;mail 495 316 1 0;star 532 313 .8 0;passport 82 322 1 -8;heart 79 291 .8 0;scooter 556 322 1 0;
gear 473 345 1 0;spark 500 345 1 0;ball 331 345 1 0;shades 272 358 1 -8;shoe 365 360 1 -5;star 450 356 .9 0;face 409 365 1 0;blue 490 372 1 10;spark 505 382 .8 0;
ufo 5 340 1 0;snorkel 60 371 1 0;paw 108 375 .9 0;lens 123 393 1 0;star 141 374 .8 0;star 210 347 .9 0;deck 184 365 1 4;camera 122 342 .9 0;snake 250 390 1 0;
pin 348 393 1 0;voice 365 418 1 -10;burst 430 404 1 0;tower 446 412 1 6;bolt 463 392 .8 0;milk 492 418 1 0;bread 496 452 1 -6;pack 10 421 1 0;penguin 66 434 1 0;
spark 40 403 1 0;spark 466 435 .9 0;spark 419 480 .9 0;blossom 126 440 1 0;sub 163 474 1 0;fish 205 452 1 -15;gear 217 475 .7 0;people 254 470 .75 0;camera 300 460 .95 -8;
bell 351 467 1.100 0;burger 395 455 1 -3;memo 197 420 .9 -18;heart 163 400 .7 0;leaf 475 477 .9 0;bolt 538 470 .9 10;star 37 467 .8 0;cursor 431 487 1 0;hands 45 500 1 0;note 14 490 .9 0;
star 394 491 .8 0;star -1 515 1.100 0;sprout 285 498 .85 0;ice 335 514 1 -8;blob 375 527 1 0;cake 435 532 1 0;bottle 471 529 1.150 -8;memo 504 503 1.100 -18;star 410 515 .8 0;
turtle 245 520 1 0;star 230 495 1 0;star 223 551 1.100 0;hi 245 586 .9 0;wink 291 552 1 -12;dog 22 553 1 0;pics 92 545 1 0;cat 362 585 1 0;memo 423 588 .95 0;heart 453 584 .9 -15;
star 422 563 .8 0;drop 326 546 .8 0;drop 365 548 .8 0;drop 463 561 1.200 0;drop 483 562 1.300 -20;drop 474 575 1 0;heart 504 562 1 0;spark 287 588 1 0;star 57 532 .8 0;
play 30 480 1 0;laptop 526 619 1 0;bell 470 609 1.200 -8;pencil 53 585 1 -40;apple 83 593 1 0;spark 103 605 .8 0;plant 316 612 1 0;dino 70 646 1 0;map 137 622 1 -10;heart 108 650 1 0;
mic 122 670 .65 0;car 164 655 1 0;wen 191 642 1.300 8;la 215 648 1.200 -8;clover 260 625 1 0;pad 353 645 1 0;spark 171 605 .8 0;play 170 686 1 0;orange 213 689 1 0;digital 277 664 1 -14;
rays 240 660 1 0;mug 336 692 1 14;moon 345 667 1 0;croissant 298 702 1 0;grill 393 692 1 0;ape 127 712 1 0;arm 104 722 1 0;arm 152 710 1 -12;refresh 14 684 1 0;star 71 705 1.100 0;
camera 295 740 .95 0;toothbrush 253 707 1 0;flops 349 730 1 0;key 433 727 1 0;spark 262 740 .8 0;bubbleL 512 719 .95 -6;bubbleR 536 745 .95 -6;plane 53 725 1 10;note 85 720 .9 0;tube 76 758 1 16;
book 215 744 1 -10;shuffle 138 750 1 -10;cloud 103 762 1.100 0;code 150 783 1 -12;pizza 566 788 1 0;horn 485 794 1 0;car 433 794 1 0;gear 438 763 .8 0;star 418 766 .8 0;heart 463 753 .8 -15;
cloud 473 775 1 0;spark 513 775 1 0;girl 302 775 1 0;cursor 263 773 .9 0;star 338 776 .9 0;glass 372 772 1.200 12;gear 127 802 .9 0;brush 247 789 1 0;brush 247 801 1 4;puzzle 72 801 1 0;
wand 97 792 1 0;spark 111 782 1 0;compass 471 688 1 0;creeper 523 677 1 0;mic 425 646 1 0;bolt 453 643 1 0;star 472 626 .9 0;star 499 676 .9 0;refresh 195 801 .8 0;heart 441 691 1 -15;
star 417 707 .8 0;cloud 403 805 1 0;mail 350 806 1 -8;drop 383 788 1.200 0;spark 400 628 .8 0`;

// Small bubbles between the doodles: x, y, radius
const rings = `95 15 2,85 23 2,95 32 1,108 30 1,74 25 2,38 53 3,41 41 2,28 37 2,50 89 2,17 84 2,82 88 2,116 63 3,127 49 2,140 48 2,133 68 2,88 68 2,189 12 2,185 23 4,
165 59 2,194 57 2,211 66 2,234 37 3,244 51 2,288 10 2,291 23 4,273 65 2,277 75 2,310 79 2,320 71 2,322 56 2,279 56 2,390 67 3,357 14 3,397 22 4,387 31 2,398 33 2,
440 12 4,448 17 1,486 17 3,498 20 2,524 14 1,528 5 3,466 32 3,435 62 2,455 57 3,464 68 2,510 62 2,538 20 3,367 96 3,379 108 2,368 118 2,350 124 2,318 117 1,333 78 2,
449 88 3,454 106 3,432 110 2,446 140 3,458 133 4,464 143 4,434 131 2,414 130 1,405 152 2,419 156 3,442 155 2,389 143 1,380 140 3,345 138 2,341 146 2,337 156 2,
317 141 2,299 151 3,307 162 2,353 164 3,287 139 2,283 113 2,287 108 2,277 110 2,103 124 4,117 134 4,113 143 2,100 130 2,138 156 4,148 159 2,59 157 1,65 167 2,
12 160 5,21 177 2,52 165 4,70 168 2,108 163 2,116 173 2,121 162 2,131 160 3,198 171 4,170 177 1,167 183 2,157 188 3,214 208 2,227 205 2,242 208 3,219 215 2,
295 179 3,316 160 3,293 167 2,372 156 2,405 201 4,414 206 2,384 209 2,395 209 2,375 214 2,313 210 3,301 222 3,342 218 3,340 235 2,313 195 1,348 229 2,360 230 2,
420 227 3,443 218 2,446 229 2,440 252 4,432 260 2,443 266 3,440 279 4,450 291 2,457 302 5,460 317 4,449 323 3,435 330 5,446 337 2,458 334 2,417 339 3,472 277 3,
461 279 2,454 245 3,467 238 2,477 234 1,470 249 2,411 240 2,263 234 4,242 234 4,249 240 2,270 248 3,242 208 3,280 280 2,266 269 2,274 267 1,287 301 3,275 298 2,
310 307 4,299 318 4,285 315 4,290 324 1,309 320 2,340 302 2,345 269 2,365 300 2,374 300 2,385 299 3,378 290 2,352 345 2,345 326 2,389 332 2,233 304 3,239 311 1,
222 326 2,224 333 2,227 350 2,519 266 2,519 295 2,533 295 2,543 296 5,553 287 2,564 285 2,36 287 2,53 289 4,61 301 3,50 307 2,56 323 3,55 335 3,63 345 2,
93 325 1,106 286 2,103 275 2,95 282 3,75 275 2,80 277 1,68 281 1,49 235 2,57 235 3,65 227 2,18 285 2,25 287 2,13 281 2,20 220 3,8 220 2,498 220 4,511 345 2,
25 357 2,35 367 3,9 370 2,122 362 4,139 357 2,105 360 2,98 353 3,130 360 1,151 389 2,162 383 2,173 411 3,162 418 4,151 372 1,225 368 3,241 352 3,322 360 3,
338 382 2,324 362 3,385 351 3,360 382 2,368 381 3,413 398 2,418 371 1,434 376 3,445 369 2,466 367 2,453 363 2,528 378 2,525 398 3,506 370 4,497 360 2,
522 409 2,524 420 2,530 417 4,100 437 4,100 423 3,115 429 2,120 466 4,127 467 2,112 481 3,104 469 3,95 464 2,137 469 2,138 463 2,135 460 2,155 422 2,180 423 2,
182 437 3,190 438 2,193 432 2,228 457 2,261 444 2,197 471 2,331 445 3,330 437 3,346 435 1,338 449 2,325 455 3,324 466 2,326 475 2,366 440 3,367 449 2,362 466 2,
376 482 2,433 471 2,440 459 3,450 481 4,427 473 2,443 474 2,462 436 3,410 465 3,401 474 2,489 486 2,500 487 3,462 466 3,379 494 4,392 490 4,378 501 2,370 500 2,
417 497 1,408 473 3,413 490 4,359 500 3,352 490 3,343 512 2,349 522 3,343 491 2,409 493 2,403 502 3,411 503 2,413 546 2,407 537 2,413 556 2,406 566 3,432 566 4,
446 490 2,448 506 3,492 514 3,490 529 2,497 541 4,503 532 2,508 523 2,502 548 2,489 578 2,506 577 3,497 556 2,533 531 3,541 523 2,538 500 2,551 525 3,
576 541 2,31 549 2,47 549 4,49 570 2,39 568 3,23 532 4,28 552 2,88 569 2,104 569 2,46 580 3,65 586 2,61 606 3,105 588 2,266 546 3,260 552 3,263 565 2,300 580 2,
308 579 2,277 593 2,309 597 2,306 612 4,288 605 3,281 630 2,257 610 3,214 602 4,217 614 2,237 618 2,232 635 4,228 626 2,176 630 2,279 642 3,285 631 2,
256 648 2,309 648 2,308 662 2,370 620 3,383 617 4,374 618 3,393 637 3,392 663 2,362 684 2,335 735 2,322 706 3,331 715 3,329 698 3,276 690 3,281 690 3,270 699 4,
257 695 2,247 684 3,239 676 1,240 687 3,177 708 2,185 704 3,169 715 3,190 662 2,196 660 3,200 662 3,211 658 3,223 656 2,189 652 2,187 670 2,139 652 1,148 676 3,
137 679 4,139 668 3,105 638 3,99 620 2,106 626 2,105 631 2,34 682 3,48 692 4,37 690 2,24 706 5,11 709 5,35 705 3,45 706 4,52 701 2,75 691 3,88 694 4,103 687 2,
5 721 2,14 723 3,36 732 2,63 742 2,30 748 4,34 750 1,5 777 4,6 765 2,11 785 2,104 780 2,123 773 3,130 783 3,141 779 1,175 772 5,174 784 2,185 784 3,
188 795 4,210 788 4,215 802 3,224 787 3,215 777 2,236 773 3,243 770 2,253 765 2,304 748 4,312 753 3,325 748 3,349 763 3,326 761 2,354 745 4,360 737 2,376 735 4,
405 624 2,414 622 2,415 621 2,420 614 3,428 613 4,440 607 4,401 603 2,404 607 2,435 620 2,415 622 3,440 630 3,456 621 3,466 652 2,440 664 3,415 666 2,418 677 3,
429 681 3,438 676 2,448 672 3,482 661 3,494 662 2,498 695 3,506 698 2,492 705 3,516 699 2,422 691 2,431 706 2,419 721 3,405 734 2,415 736 2,417 750 4,426 751 1,
448 748 2,460 735 2,470 728 4,472 740 2,483 742 2,496 746 4,481 753 2,488 761 3,499 761 3,453 773 4,529 767 2,537 765 3,546 766 2,521 789 3,527 801 3,513 799 2,
569 757 2,571 731 3,559 711 5,565 690 3,553 708 3,475 715 2`;

const doodleMarkup = doodles.split(';').map(entry => {
  const [name, x, y, scale, turn] = entry.trim().split(' ');
  return `<g transform="translate(${x} ${y}) rotate(${turn}) scale(${scale})">${shapes[name]}</g>`;
}).join('');

const ringMarkup = rings.split(',').map(entry => {
  const [x, y, r] = entry.trim().split(' ');
  return `<circle cx="${x}" cy="${y}" r="${r}"/>`;
}).join('');

const tileWidth = 540;
const tileHeight = 810;
const copies = [];
for (let y = 0; y < window.innerHeight; y += tileHeight) {
  for (let x = -tileWidth; x < window.innerWidth; x += tileWidth) {
    copies.push(`<use href="#tile" x="${x}" y="${y}"/>`);
  }
}
document.querySelector('.wallpaper').innerHTML =
  `<defs><g id="tile">${doodleMarkup}${ringMarkup}</g></defs>${copies.join('')}`;
```
